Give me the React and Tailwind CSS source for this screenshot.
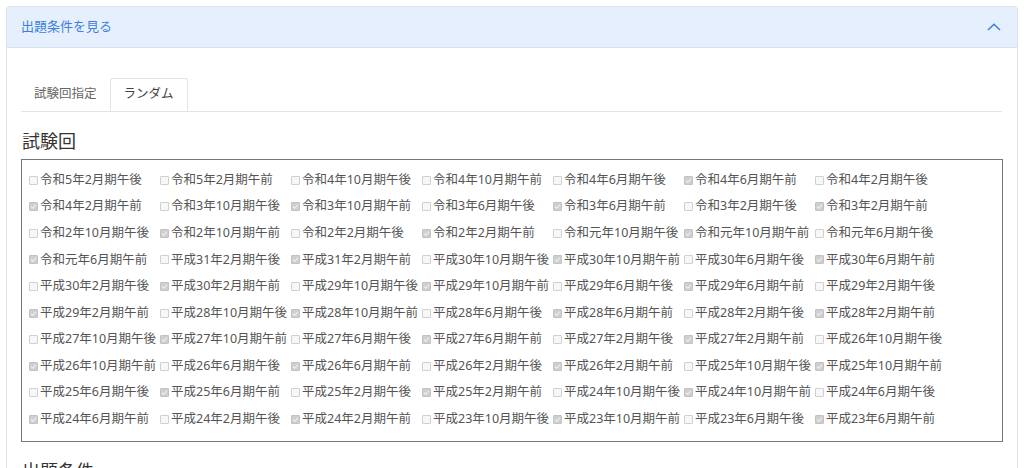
import { useState } from "react"

const periods = [
  "令和5年2月", "令和4年10月", "令和4年6月", "令和4年2月", "令和3年10月", "令和3年6月",
  "令和3年2月", "令和2年10月", "令和2年2月", "令和元年10月", "令和元年6月", "平成31年2月",
  "平成30年10月", "平成30年6月", "平成30年2月", "平成29年10月", "平成29年6月", "平成29年2月",
  "平成28年10月", "平成28年6月", "平成28年2月", "平成27年10月", "平成27年6月", "平成27年2月",
  "平成26年10月", "平成26年6月", "平成26年2月", "平成25年10月", "平成25年6月", "平成25年2月",
  "平成24年10月", "平成24年6月", "平成24年2月", "平成23年10月", "平成23年6月",
]

const exams = periods.flatMap((p, i) => [
  { label: `${p}期午後`, checked: false },
  { label: `${p}期午前`, checked: i > 1 },
])

const CheckBox = ({ checked }) => (
  <span
    className={
      checked
        ? "inline-flex items-center justify-center w-[9px] h-[9px] mr-[2px] shrink-0 rounded-[1px] border border-[#c2c2c2] bg-[#cfcfcf]"
        : "inline-block w-[9px] h-[9px] mr-[2px] shrink-0 rounded-[1px] border border-[#d0d0d0] bg-[#f7f7f7]"
    }
  >
    {checked && (
      <svg viewBox="0 0 10 10" className="w-[7px] h-[7px]">
        <path d="M1.5 5.2 L4 7.5 L8.5 2.5" fill="none" stroke="#f2f2f2" strokeWidth="1.6" />
      </svg>
    )}
  </span>
)

export default function App() {
  const [tab, setTab] = useState("random")
  const font = { fontFamily: '"Noto Sans", "Noto Sans CJK JP", sans-serif' }

  return (
    <div className="w-[1024px] h-[468px] overflow-hidden bg-white pt-[6px] px-[6px]" style={font}>
      <div className="border border-[#dfe3e8] rounded-t-[3px] h-[480px]">
        {/* Header */}
        <div className="flex items-center justify-between h-[41px] bg-[#e6effd] border-b border-[#d6e0ee] pl-[14px] pr-[16px]">
          <span className="text-[13px] text-[#3d7fe0]">出題条件を見る</span>
          <svg viewBox="0 0 14 8" className="w-[14px] h-[8px]">
            <path d="M1 7 L7 1.2 L13 7" fill="none" stroke="#3d7fe0" strokeWidth="1.5" />
          </svg>
        </div>

        <div className="px-[14px] pt-[30px]">
          {/* Tabs */}
          <div className="flex border-b border-[#e4e4e4] mr-[1px]">
            <button
              onClick={() => setTab("select")}
              className="h-[33px] px-[12px] text-[12.5px] text-[#666] border border-transparent"
            >
              試験回指定
            </button>
            <button
              onClick={() => setTab("random")}
              className="h-[33px] px-[13px] text-[12.5px] text-[#444] border border-[#e4e4e4] border-b-white -mb-px bg-white rounded-t-[3px]"
            >
              ランダム
            </button>
          </div>

          {/* 試験回 */}
          <h2 className="mt-[16px] text-[18px] leading-[26px] text-[#333] pl-[1px]">試験回</h2>
          <div className="mt-[5px] border border-[#777] pl-[7px] pt-[7px] pb-[9px]">
            <div className="grid grid-cols-[repeat(7,131px)]">
              {exams.map((e) => (
                <label key={e.label} className="flex items-center h-[26.56px] text-[12.5px] text-[#555] whitespace-nowrap">
                  <CheckBox checked={e.checked} />
                  {e.label}
                </label>
              ))}
            </div>
          </div>

          {/* 出題条件 */}
          <h2 className="mt-[16px] text-[18px] leading-[26px] text-[#333] pl-[1px]">出題条件</h2>
        </div>
      </div>
    </div>
  )
}
